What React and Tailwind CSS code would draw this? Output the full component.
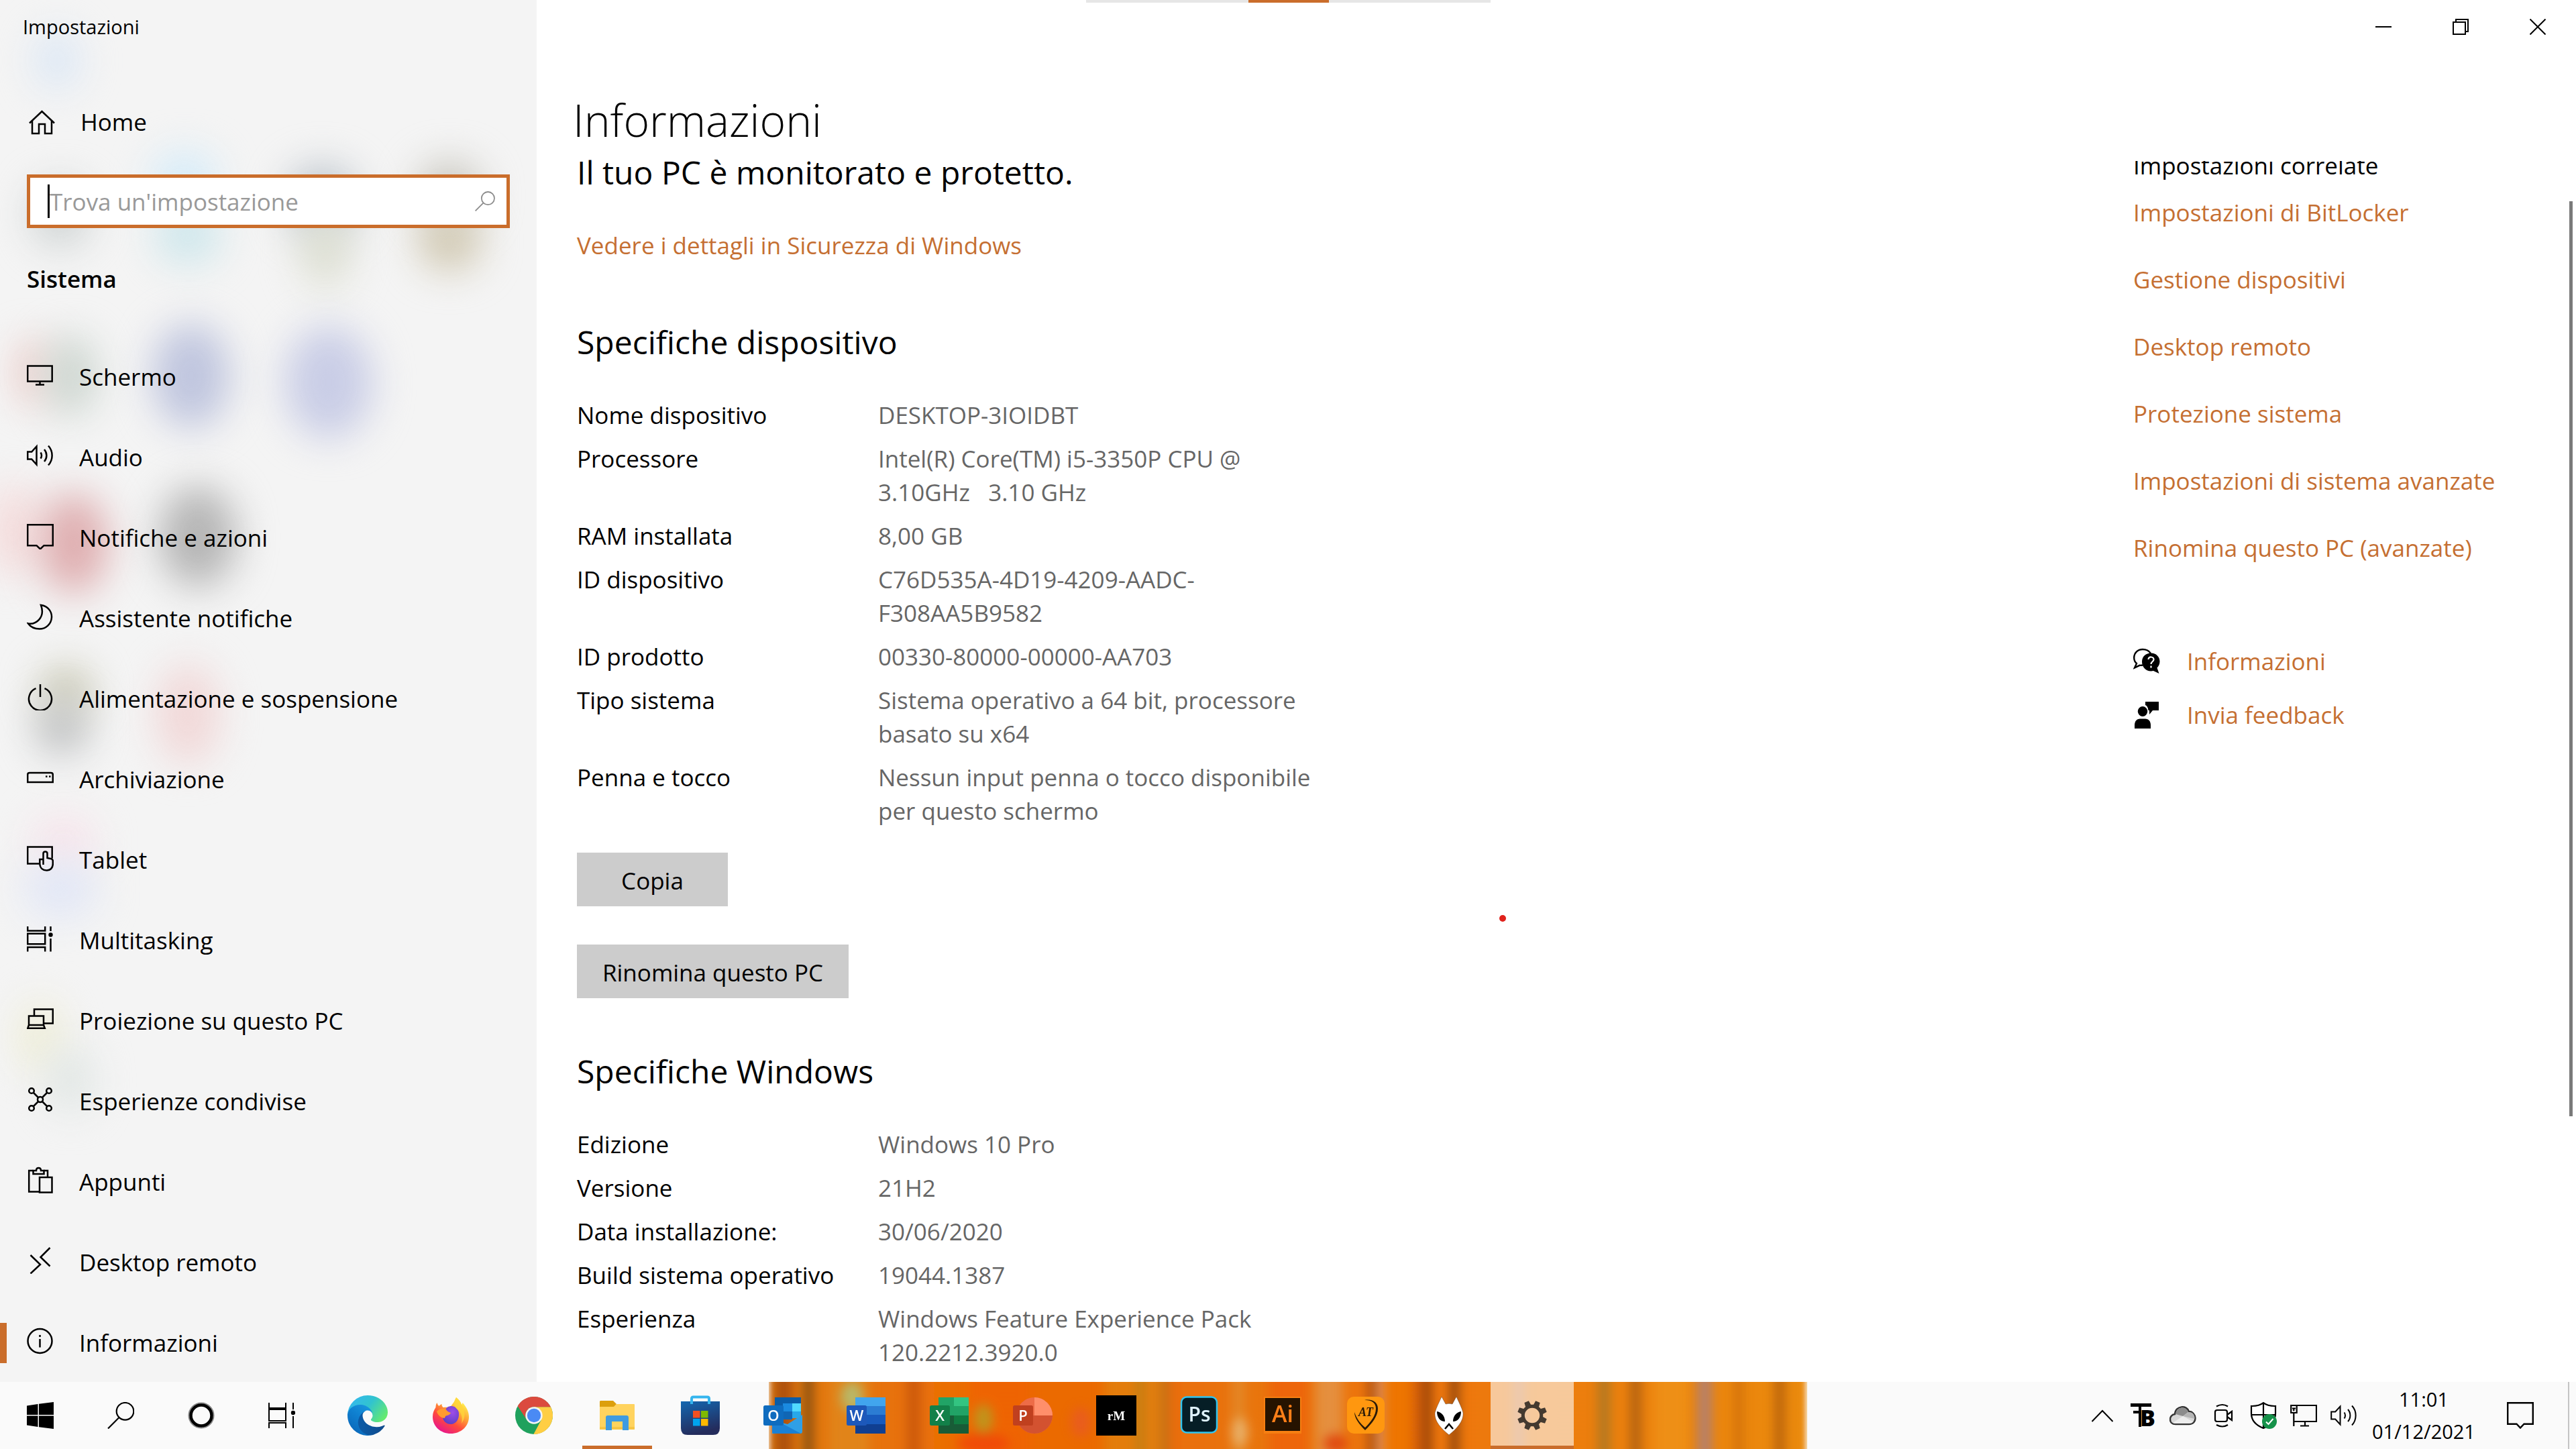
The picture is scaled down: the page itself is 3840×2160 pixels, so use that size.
import React from "react";

/* ---------- line icons, drawn on a 40 x 40 grid ---------- */

function Glyph({ children, width = 2.5, className = "size-10" }) {
  return (
    <svg
      viewBox="0 0 40 40"
      className={className + " shrink-0"}
      fill="none"
      stroke="currentColor"
      strokeWidth={width}
      aria-hidden="true"
    >
      {children}
    </svg>
  );
}

const icons = {
  home: (
    <>
      <path d="M4 21.500 22.500 4 41 21.500" />
      <path d="M8 18v19h10V23h9v14h10V18" />
    </>
  ),
  display: (
    <>
      <path d="M1.200 6.500h36.500v23H1.200z" />
      <path d="M19.500 29.500v5M13 34.500h13" />
    </>
  ),
  audio: (
    <>
      <path d="M1.200 14.500h6l7.300-8v27l-7.300-8h-6z" />
      <path d="M20.500 15.500c2 2.500 2 6.500 0 9M26 11c4.500 5 4.500 13 0 18M32 5.500c7.500 8 7.500 21 0 29" />
    </>
  ),
  notify: <path d="M1.200 3.200h37.600v31H25.500L20 39.500l-5.500-5.300H1.200z" />,
  moon: <path d="M21 3c10.500 1.500 16.500 9.500 16 18.500-.6 9.500-8.500 17-18 17-7.500 0-13.500-3-17-8C13 32.500 28 22 21 3z" />,
  power: (
    <>
      <path d="M13.500 7.200A17 17 0 1 0 26.500 7.200" />
      <path d="M20 1v19" />
    </>
  ),
  storage: (
    <>
      <path d="M4 13h32q2.800 0 2.800 2.800V27H1.200V15.800Q1.200 13 4 13z" />
      <path d="M28 18.500h2.500M33 18.500h2.500" />
    </>
  ),
  tablet: (
    <>
      <path d="M18 28.500H1.200V3.500h36.500v17" />
      <path d="M24.500 30V13.500q0-3 3-3t3 3V20l6 1.200q2.300.6 2.300 3V29c0 6-4 9.500-9 9.500-6 0-10-3.500-10.500-9.500v-7h5" />
    </>
  ),
  multitask: (
    <>
      <path d="M1.200 2v6.500h26V2M1.200 12.800h26v15.500h-26zM1.200 39.500V33h26v6.500M35.500 2v7M35.500 20v19.500" />
      <circle cx="35.500" cy="14.500" r="3.200" fill="currentColor" stroke="none" />
    </>
  ),
  project: (
    <>
      <path d="M11 15V5.500h27.800v21H25" />
      <path d="M3 15.500h22V29H3zM3 29 1.300 33.800h25.500L25 29" />
    </>
  ),
  shared: (
    <>
      <circle cx="20" cy="20" r="4" />
      <circle cx="7" cy="7" r="3.800" />
      <circle cx="33" cy="7" r="3.800" />
      <circle cx="7" cy="33" r="3.800" />
      <circle cx="33" cy="33" r="3.800" />
      <path d="m10 10 7 7M30 10l-7 7M10 30l7-7M30 30l-7-7" />
    </>
  ),
  clipboard: (
    <>
      <path d="M18 37.500H3.200V6h6M25 6h6v10" />
      <path d="M9.500 11V6h4.500c0-5.500 7-5.500 7 0h4.500v5z" />
      <path d="M19 16h18.500v22.500H19z" />
    </>
  ),
  remote: <path d="M34.500 1 20.500 15l14 13.500M5.500 12 20 26 5.500 39.500" />,
  info: (
    <>
      <circle cx="19.500" cy="20" r="18" />
      <path d="M19.500 17v12.500M19.500 11v3" />
    </>
  ),
};

const navItems = [
  ["display", "Schermo"],
  ["audio", "Audio"],
  ["notify", "Notifiche e azioni"],
  ["moon", "Assistente notifiche"],
  ["power", "Alimentazione e sospensione"],
  ["storage", "Archiviazione"],
  ["tablet", "Tablet"],
  ["multitask", "Multitasking"],
  ["project", "Proiezione su questo PC"],
  ["shared", "Esperienze condivise"],
  ["clipboard", "Appunti"],
  ["remote", "Desktop remoto"],
  ["info", "Informazioni"],
];

/* Desktop icons showing softly through the acrylic side panel: x, y, rx, ry, colour */
const glow = [
  [85, 90, 34, 44, "#dbe7f5"],
  [90, 320, 45, 50, "#d0d5d5"],
  [275, 265, 50, 40, "#d6ecf9"],
  [280, 350, 50, 45, "#cfe7ec"],
  [480, 300, 55, 55, "#c0c7ce"],
  [485, 370, 38, 60, "#dddfd2"],
  [670, 290, 50, 50, "#cac8c0"],
  [670, 360, 48, 45, "#d2cab4"],
  [50, 555, 28, 50, "#efcfcc"],
  [105, 560, 40, 60, "#cdd6d0"],
  [285, 560, 58, 78, "#bfc5de"],
  [490, 570, 66, 84, "#c9cde6"],
  [20, 790, 45, 70, "#f5dfdf"],
  [110, 810, 52, 75, "#dfaeb0"],
  [295, 800, 58, 75, "#b5b5b5"],
  [98, 1030, 40, 38, "#cbcab6"],
  [92, 1085, 40, 40, "#bfc1c2"],
  [280, 1065, 48, 75, "#f1d8d8"],
  [95, 1255, 48, 40, "#f7e4eb"],
  [90, 1325, 56, 45, "#e2e7f6"],
  [60, 1545, 34, 55, "#efeed8"],
  [105, 1610, 34, 50, "#e0e6e4"],
];

function SidebarGlow() {
  return (
    <svg
      className="pointer-events-none absolute left-0 top-0"
      width="800"
      height="1800"
      aria-hidden="true"
    >
      <defs>
        <filter
          id="glow-blur"
          x="-150%"
          y="-150%"
          width="400%"
          height="400%"
          colorInterpolationFilters="sRGB"
        >
          <feGaussianBlur stdDeviation="28" />
        </filter>
      </defs>
      {glow.map(([x, y, rx, ry, color]) => (
        <ellipse key={x + "-" + y} cx={x} cy={y} rx={rx} ry={ry} fill={color} filter="url(#glow-blur)" />
      ))}
    </svg>
  );
}

function Sidebar() {
  return (
    <aside className="relative w-[800px] shrink-0 overflow-hidden bg-[#f4f4f4]">
      <SidebarGlow />
      <div className="relative">
        <div className="flex h-20 items-center pl-[34px] text-[29px]">Impostazioni</div>
        <a href="#home" className="mt-[60px] flex h-[84px] items-center gap-10 pl-10">
          <Glyph className="size-10 overflow-visible">{icons.home}</Glyph>
          <span>Home</span>
        </a>
        <div className="mx-10 mt-9 flex h-20 items-center border-[5px] border-[#ca6d2b] bg-white pl-[26px] pr-[16px]">
          <span className="h-[50px] w-[3px] shrink-0 bg-black" />
          <input
            type="text"
            aria-label="Trova un'impostazione"
            placeholder="Trova un'impostazione"
            className="h-full min-w-0 flex-1 bg-transparent text-black placeholder-[#999999] outline-none"
          />
          <Glyph className="size-8 text-[#8c8c8c]" width={2.2}>
            <circle cx="25.500" cy="14.500" r="12" />
            <path d="M17 23 2 38" />
          </Glyph>
        </div>
        <h2 className="ml-10 mt-[46px] leading-[60px] font-semibold">Sistema</h2>
        <nav className="mt-14">
          {navItems.map(([icon, label]) => (
            <a
              key={label}
              href={"#" + icon}
              aria-current={icon === "info" ? "page" : undefined}
              className="flex h-[120px] items-center"
            >
              <span
                className={
                  icon === "info" ? "h-[60px] w-2.5 bg-[#ca6d2b]" : "h-[60px] w-2.5"
                }
              />
              <span className="flex items-center gap-[38px] pl-[30px]">
                <span className="pb-1.5">
                  <Glyph>{icons[icon]}</Glyph>
                </span>
                <span>{label}</span>
              </span>
            </a>
          ))}
        </nav>
      </div>
    </aside>
  );
}

/* ---------- main page ---------- */

const deviceSpecs = [
  ["Nome dispositivo", "DESKTOP-3IOIDBT"],
  ["Processore", "Intel(R) Core(TM) i5-3350P CPU @ 3.10GHz\u00a0\u00a0\u00a03.10\u00a0GHz"],
  ["RAM installata", "8,00 GB"],
  ["ID dispositivo", "C76D535A-4D19-4209-AADC-F308AA5B9582"],
  ["ID prodotto", "00330-80000-00000-AA703"],
  ["Tipo sistema", "Sistema operativo a 64 bit, processore basato su x64"],
  ["Penna e tocco", "Nessun input penna o tocco disponibile per questo schermo"],
];

const windowsSpecs = [
  ["Edizione", "Windows 10 Pro"],
  ["Versione", "21H2"],
  ["Data installazione:", "30/06/2020"],
  ["Build sistema operativo", "19044.1387"],
  ["Esperienza", "Windows Feature Experience Pack 120.2212.3920.0"],
];

function SpecList({ rows }) {
  return (
    <dl className="mt-[54px] flex flex-col gap-[15px] leading-[50px]">
      {rows.map(([name, value]) => (
        <div key={name} className="grid grid-cols-[449px_690px]">
          <dt>{name}</dt>
          <dd className="text-[#666666]">{value}</dd>
        </div>
      ))}
    </dl>
  );
}

const relatedLinks = [
  "Impostazioni di BitLocker",
  "Gestione dispositivi",
  "Desktop remoto",
  "Protezione sistema",
  "Impostazioni di sistema avanzate",
  "Rinomina questo PC (avanzate)",
];

function Related() {
  return (
    <aside className="w-[660px] shrink-0 leading-[50px]">
      <div className="mt-[19px] flex h-8 items-end overflow-hidden">
        <h2>Impostazioni correlate</h2>
      </div>
      <ul className="mt-5 flex flex-col gap-[50px] text-[#c56f32]">
        {relatedLinks.map((label) => (
          <li key={label}>
            <a href="#correlate">{label}</a>
          </li>
        ))}
      </ul>
      <ul className="mt-[104px] text-[#c56f32]">
        <li>
          <a href="#aiuto" className="flex h-20 items-center gap-10">
            <svg viewBox="0 0 40 40" className="size-10 text-black" aria-hidden="true">
              <path
                d="M14 25.500c-1.500.4-3 .4-4.500.3L2 29.500l3-6.500C2 20.500 1.200 18 1.200 14.500 1.200 7.500 6.500 2 14 2c5.500 0 9.500 2 12 6"
                fill="none"
                stroke="currentColor"
                strokeWidth="2.400"
              />
              <path
                d="M26.500 7.500C34 7.500 39.500 13 39.500 20c0 4-1.500 7-4 9.500l3 8.500-8.500-4c-1 .3-2.300.5-3.500.5-7.500 0-13.500-6-13.500-14s6-13 13.500-13z"
                fill="currentColor"
              />
              <path d="M22.500 17c.5-5 8.500-4.500 8 .3-.3 3-4 3.200-4 6.700M26.500 26.500v3" fill="none" stroke="#fff" strokeWidth="2.200" />
            </svg>
            Informazioni
          </a>
        </li>
        <li>
          <a href="#feedback" className="flex h-20 items-center gap-10">
            <svg viewBox="0 0 40 40" className="size-10 text-black" fill="currentColor" aria-hidden="true">
              <path d="M18 0h20v13H29l-5 6v-6h-1.500C22 8.500 20.500 6 18 5z" />
              <ellipse cx="14" cy="14.500" rx="7.200" ry="7.500" />
              <path d="M2 40v-5c0-5.500 3-9.500 8-9.500h8c5 0 8 4 8 9.500v5z" />
            </svg>
            Invia feedback
          </a>
        </li>
      </ul>
    </aside>
  );
}

function WindowControls() {
  return (
    <div className="flex h-20 justify-end">
      <button type="button" aria-label="Riduci a icona" className="grid w-[115px] place-items-center">
        <svg viewBox="0 0 24 24" className="size-6" fill="none" stroke="#000" strokeWidth="2">
          <path d="M0 12h24" />
        </svg>
      </button>
      <button type="button" aria-label="Ripristina" className="grid w-[115px] place-items-center">
        <svg viewBox="0 0 24 24" className="size-6" fill="none" stroke="#000" strokeWidth="2">
          <path d="M1 5h18v18H1zM5 5V1h18v18h-4" />
        </svg>
      </button>
      <button type="button" aria-label="Chiudi" className="grid w-[115px] place-items-center">
        <svg viewBox="0 0 24 24" className="size-6" fill="none" stroke="#000" strokeWidth="2">
          <path d="m.5.5 23 23m0-23-23 23" />
        </svg>
      </button>
    </div>
  );
}

function Content() {
  return (
    <main className="relative flex min-w-0 flex-1 flex-col bg-white">
      <WindowControls />
      <h1 className="mt-[55px] pl-[54px] text-[66px] leading-[86px] font-light">Informazioni</h1>
      <div className="min-h-0 flex-1 overflow-hidden">
        <div className="flex justify-between pl-[60px]">
          <div>
            <p className="pt-1.5 text-[48px] leading-[60px]">Il tuo PC è monitorato e protetto.</p>
            <a href="#sicurezza" className="mt-[54px] block leading-[50px] text-[#c56f32]">
              Vedere i dettagli in Sicurezza di Windows
            </a>
            <h2 className="mt-[89px] text-[48px] leading-[60px]">Specifiche dispositivo</h2>
            <SpecList rows={deviceSpecs} />
            <button type="button" className="mt-[37px] block h-20 w-[225px] bg-[#cccccc] pt-1">
              Copia
            </button>
            <button type="button" className="mt-[57px] block h-20 w-[405px] bg-[#cccccc] pt-1">
              Rinomina questo PC
            </button>
            <h2 className="mt-[79px] text-[48px] leading-[60px]">Specifiche Windows</h2>
            <SpecList rows={windowsSpecs} />
          </div>
          <Related />
        </div>
      </div>
      <div className="absolute right-[5px] top-[300px] h-[1364px] w-[5px] bg-[#7a7a7a]" />
    </main>
  );
}

/* ---------- taskbar ---------- */

/* Blurred autumn wallpaper behind the app buttons: x, width, colour, opacity */
const streaks = [
  [8, 28, "#a3470c", 0.8],
  [52, 14, "#7a4a14", 0.9],
  [90, 60, "#e08a20", 0.7],
  [206, 20, "#c0500c", 0.7],
  [300, 90, "#f25a05", 0.4],
  [500, 90, "#e08410", 0.7],
  [548, 12, "#a8801c", 0.6],
  [584, 12, "#a8701c", 0.6],
  [690, 20, "#e09a40", 0.5],
  [745, 60, "#f05a0a", 0.6],
  [815, 40, "#e0a870", 0.5],
  [892, 14, "#9a4410", 0.7],
  [907, 10, "#dba890", 0.7],
  [960, 16, "#c04c08", 0.6],
  [975, 14, "#8a3c08", 0.8],
  [1015, 14, "#7a3a0c", 0.8],
  [1110, 16, "#b08080", 0.8],
  [1236, 18, "#8a7430", 0.6],
  [1284, 16, "#a35a14", 0.8],
  [1320, 50, "#f0981c", 0.6],
  [1384, 22, "#b08074", 0.9],
  [1440, 12, "#c0600c", 0.6],
  [1500, 14, "#a8560c", 0.8],
];

function Wallpaper() {
  return (
    <svg
      className="pointer-events-none absolute inset-y-0 left-[1146px] h-full w-[1548px]"
      viewBox="0 0 1548 100"
      preserveAspectRatio="none"
      aria-hidden="true"
    >
      <defs>
        <filter
          id="streak-blur"
          x="-5%"
          y="-40%"
          width="110%"
          height="180%"
          colorInterpolationFilters="sRGB"
        >
          <feGaussianBlur stdDeviation="8" />
        </filter>
        <filter id="edge-blur" x="-2%" y="-20%" width="104%" height="140%">
          <feGaussianBlur stdDeviation="4 0" />
        </filter>
        <linearGradient id="autumn" x1="0" x2="1">
          <stop offset="0" stopColor="#e07a10" />
          <stop offset=".2" stopColor="#ec6c04" />
          <stop offset=".35" stopColor="#ea6a06" />
          <stop offset=".5" stopColor="#e8780c" />
          <stop offset=".6" stopColor="#ee7406" />
          <stop offset="1" stopColor="#ea8a10" />
        </linearGradient>
      </defs>
      <rect x="2" width="1544" height="100" fill="url(#autumn)" filter="url(#edge-blur)" />
      <g filter="url(#streak-blur)">
        {streaks.map(([x, w, color, opacity]) => (
          <rect key={x} x={x} y="-40" width={w} height="180" fill={color} opacity={opacity} />
        ))}
        <ellipse cx="124" cy="22" rx="16" ry="22" fill="#b8b868" />
        <ellipse cx="320" cy="55" rx="14" ry="22" fill="#c0941c" />
        <ellipse cx="320" cy="92" rx="40" ry="14" fill="#f04a08" />
        <ellipse cx="465" cy="60" rx="14" ry="22" fill="#e8503c" opacity=".5" />
        <ellipse cx="702" cy="75" rx="12" ry="22" fill="#e8b068" />
        <ellipse cx="845" cy="92" rx="18" ry="14" fill="#e04a10" />
      </g>
    </svg>
  );
}

function OfficeTile({ letter, badge, children }) {
  return (
    <svg viewBox="0 0 60 60" className="size-[60px]" aria-hidden="true">
      {children}
      <rect x="0" y="15" width="30" height="30" rx="2.500" fill={badge} />
      <text x="15" y="38" textAnchor="middle" fontSize="22" fontWeight="600" fill="#fff">
        {letter}
      </text>
    </svg>
  );
}

const appIcons = {
  Edge: (
    <svg viewBox="0 0 256 256" className="size-[60px]" aria-hidden="true">
      <defs>
        <linearGradient id="edge-a" x1=".2" x2="1" y1=".5" y2=".5">
          <stop offset="0" stopColor="#0c59a4" />
          <stop offset="1" stopColor="#114a8b" />
        </linearGradient>
        <linearGradient id="edge-b" x1=".9" x2=".3" y1="0" y2="1">
          <stop offset="0" stopColor="#1b9de2" />
          <stop offset=".5" stopColor="#0f80d0" />
          <stop offset="1" stopColor="#0a66b8" />
        </linearGradient>
        <linearGradient id="edge-c" x1="0" x2="1" y1=".2" y2=".7">
          <stop offset="0" stopColor="#35b8f0" />
          <stop offset=".5" stopColor="#31c3cf" />
          <stop offset="1" stopColor="#66eb6e" />
        </linearGradient>
      </defs>
      <path fill="url(#edge-a)" d="M231 190.500c-3.400 1.800-6.900 3.400-10.500 4.700a101 101 0 0 1-35.900 6.500c-47.300 0-88.500-32.500-88.500-74.300.1-11.400 6.400-21.900 16.400-27.300-42.800 1.800-53.800 46.400-53.800 72.500 0 73.900 68.100 81.400 82.800 81.400 7.900 0 19.800-2.300 27-4.600l1.300-.4a128 128 0 0 0 66.600-52.800 4 4 0 0 0-5.400-5.700z" />
      <path fill="url(#edge-b)" d="M105.700 241.400A79 79 0 0 1 83 220.100a80.700 80.700 0 0 1 29.500-120c3.100-1.500 8.400-4.100 15.500-4a32.400 32.400 0 0 1 25.700 13 32 32 0 0 1 6.400 18.700c0-.2 24.500-79.600-80-79.600-43.900 0-80 41.700-80 78.200-.2 19.300 4 38.500 12.100 56a128 128 0 0 0 156.400 67.100 75.500 75.500 0 0 1-62.900-8.100z" />
      <path fill="url(#edge-c)" d="M152.300 148.900c-.8 1-3.300 2.500-3.300 5.700 0 2.600 1.700 5.100 4.700 7.200 14.400 10 41.500 8.700 41.600 8.700 10.700 0 21.100-2.900 30.300-8.300a61.400 61.400 0 0 0 30.400-52.900c.3-22.400-8-37.300-11.300-43.900C223.500 23.900 177.700 0 128 0A128 128 0 0 0 0 126.200c.5-36.500 36.800-66 80-66 3.500 0 23.500.3 42 10.100 16.300 8.600 24.900 18.900 30.800 29.200 6.200 10.700 7.300 24.100 7.300 29.500s-2.700 13.300-7.800 19.900z" />
    </svg>
  ),
  Firefox: (
    <svg viewBox="0 0 56 56" className="size-14" aria-hidden="true">
      <defs>
        <linearGradient id="ff-a" x1=".8" x2=".25" y1=".1" y2=".95">
          <stop offset="0" stopColor="#fff44f" />
          <stop offset=".35" stopColor="#ffa436" />
          <stop offset=".65" stopColor="#ff4b3b" />
          <stop offset="1" stopColor="#e8178a" />
        </linearGradient>
        <radialGradient id="ff-b" cx=".6" cy=".35" r=".7">
          <stop offset="0" stopColor="#a04ce8" />
          <stop offset="1" stopColor="#5b3fc4" />
        </radialGradient>
      </defs>
      <path fill="url(#ff-a)" d="M36 1c4 3 7 7 8 11 1-1 1.500-2 1.500-3C51 15 55 22 55 30c0 14.500-12 25-27 25S1 44.500 1 30c0-6 2-10 4.500-14 0-2.500.5-5 2-7 .5 2 1.500 4 3 5 1-1.500 2.500-2.500 4-3 0 2 .5 3.500 2 5 4-.5 8-.5 11 0C29 12 33 9 36 1z" />
      <path fill="url(#ff-b)" d="M20 20c1-4 5-6 9-6 5 0 10 4 11 10 1 9-4 17-12 17-7 0-12-5-12-11 0-2 .5-3 1.500-4 3 1 6 0 8-2-2-1-4-2-5.500-4z" />
      <path fill="#ff9b2e" d="M7 22c4-4 9-5 14-3 1.500 3 4 4 7 5-1 3-5 4-7 4.500-1 .5-2 2-2 3.500-4 0-10-3-12-10z" />
      <path fill="#ffd43a" opacity=".8" d="M36 1c4 3 7 7 8 11 6 9 6 20 0 28 2-8 0-16-5-20-5-4-9-9-3-19z" />
    </svg>
  ),
  Chrome: (
    <svg viewBox="2 2 44 44" className="size-14" aria-hidden="true">
      <circle cx="24" cy="24" r="22" fill="#1fa15d" />
      <path fill="#ffce44" d="M24 14h19.600A22 22 0 0 1 23.500 46l9.200-17z" />
      <path fill="#db4a3e" d="M4.900 13a22 22 0 0 1 38.700 1H24a10 10 0 0 0-8.700 15z" />
      <circle cx="24" cy="24" r="10" fill="#f4f4f4" />
      <circle cx="24" cy="24" r="8" fill="#4a8af4" />
    </svg>
  ),
  "Esplora file": (
    <svg viewBox="0 0 54 54" className="size-[54px]" aria-hidden="true">
      <path fill="#dc9f0c" d="M2 5h19l5 5-5 6H1V6z" />
      <path fill="#ffd35e" d="M1 14h21l4-4h26q1 0 1 1v36q0 1-1 1H1z" />
      <path fill="#f7c545" d="M1 44h52v3q0 1-1 1H1z" />
      <path fill="#3f9be0" d="M10 49V30q0-3 3-3h28q3 0 3 3v19h-9V36H19v13z" />
    </svg>
  ),
  "Microsoft Store": (
    <svg viewBox="0 0 60 60" className="size-[60px]" aria-hidden="true">
      <defs>
        <linearGradient id="store" x1="0" x2=".3" y1="0" y2="1">
          <stop offset="0" stopColor="#1467b0" />
          <stop offset="1" stopColor="#242c5c" />
        </linearGradient>
      </defs>
      <path fill="url(#store)" d="M1 9h58v40q0 10-10 10H11Q1 59 1 49z" />
      <path fill="none" stroke="#35b5ee" strokeWidth="4" d="M17 13V5q0-2.500 2.500-2.500h21Q43 2.500 43 5v8" />
      <path fill="#f25022" d="M19 23h10.500v10.500H19z" />
      <path fill="#7fba00" d="M31 23h10.500v10.500H31z" />
      <path fill="#00a4ef" d="M19 35h10.500v10.500H19z" />
      <path fill="#ffb900" d="M31 35h10.500v10.500H31z" />
    </svg>
  ),
  Outlook: (
    <OfficeTile letter="O" badge="#0f6cbf">
      <path fill="#0a5ca8" d="M17 3h39v28H17z" />
      <path fill="#1a8ae0" d="M29 12h14v12H29z" />
      <path fill="#50d9ff" d="M43 12h13v12H43z" />
      <path fill="#1066b5" d="M29 24h14v12H29z" />
      <path fill="#28a8ea" d="M43 24h13v10H43z" />
      <path fill="#2f9fe6" d="M13 57V37l23 6 22-14v25q0 3-3 3z" />
      <path fill="#1b80d4" d="M13 34l43 23H16q-3 0-3-3z" />
    </OfficeTile>
  ),
  Word: (
    <OfficeTile letter="W" badge="#1d58ba">
      <path fill="#41a5ee" d="M13 3h45v14H13z" />
      <path fill="#2b7cd3" d="M13 16h45v14H13z" />
      <path fill="#185abd" d="M13 29h45v14H13z" />
      <path fill="#103f91" d="M13 43h45v14H13z" />
    </OfficeTile>
  ),
  Excel: (
    <OfficeTile letter="X" badge="#128049">
      <path fill="#21a366" d="M13 3h23v27H13z" />
      <path fill="#33c481" d="M36 3h22v13H36z" />
      <path fill="#21a366" d="M36 16h22v14H36z" />
      <path fill="#185c37" d="M13 30h45v27H13z" />
      <path fill="#107c41" d="M36 30h22v13H36z" />
    </OfficeTile>
  ),
  PowerPoint: (
    <OfficeTile letter="P" badge="#c0401f">
      <circle cx="32" cy="30" r="27" fill="#ed6c47" />
      <path fill="#ff8f6b" d="M32 3a27 27 0 0 1 27 27H32z" />
      <path fill="#d35230" d="M5 30h54a27 27 0 0 1-54 0z" />
    </OfficeTile>
  ),
  reMarkable: (
    <svg viewBox="0 0 60 60" className="size-[60px]" aria-hidden="true">
      <path d="M0 0h60v60H0z" />
      <text x="30" y="37" textAnchor="middle" fontSize="19" fontWeight="700" fill="#fff" className="font-['Liberation_Serif',serif]">
        rM
      </text>
    </svg>
  ),
  Photoshop: (
    <svg viewBox="0 0 60 60" className="size-[60px]" aria-hidden="true">
      <rect x="3" y="2.500" width="53" height="53" rx="8" fill="#061e26" stroke="#31c5f0" strokeWidth="2.500" />
      <text x="30" y="39" textAnchor="middle" fontSize="30" fontWeight="600" fill="#dff3ff">
        Ps
      </text>
    </svg>
  ),
  Illustrator: (
    <svg viewBox="0 0 60 60" className="size-[60px]" aria-hidden="true">
      <path fill="#f67f12" d="M2 2h56v55H2z" />
      <path fill="#261300" d="M4 4h52v49H4z" />
      <text x="30" y="40" textAnchor="middle" fontSize="34" fontWeight="600" fill="#ff7f18">
        Ai
      </text>
    </svg>
  ),
  ArtTuner: (
    <svg viewBox="0 0 60 60" className="size-[60px]" aria-hidden="true">
      <rect x="2" y="2" width="56" height="55" rx="10" fill="#ff970f" />
      <path fill="#2a1a08" d="M28 7c13-2 20 4 20 13 0 11-9 22-19 32C20 43 13 34 13 25c4 11 9 17 16 23 8-8 16-18 16-28C45 11 39 7 28 7z" />
      <text x="30" y="31" textAnchor="middle" fontSize="18" fontStyle="italic" fontWeight="700" fill="#2a1a08" className="font-['Liberation_Serif',serif]">
        AT
      </text>
    </svg>
  ),
  foobar2000: (
    <svg viewBox="0 0 60 60" className="size-[60px]" aria-hidden="true">
      <path fill="#fff" stroke="#4a3020" strokeOpacity=".4" d="M19 2l6 11q5-1.500 10 0l6-11c4 9 8 16 10 24 1 13-10 24-21 33C19 50 8 39 9 26c2-8 6-15 10-24z" />
      <path d="M12 24c6 1 12 6 12 15-7 0-12-6-12-15zM48 24c-6 1-12 6-12 15 7 0 12-6 12-15z" />
      <path fill="none" stroke="#000" strokeWidth="2.500" d="M24 50l6-7 6 7" />
    </svg>
  ),
  Impostazioni: (
    <svg viewBox="-22 -22 44 44" className="size-11" aria-hidden="true">
      <circle r="13.700" fill="none" stroke="#443a30" strokeWidth="5" />
      {[22.5, 67.5, 112.5, 157.5, 202.5, 247.5, 292.5, 337.5].map((angle) => (
        <path key={angle} d="M-4.500-14-3.500-22h7l1 8z" fill="#443a30" transform={`rotate(${angle})`} />
      ))}
    </svg>
  ),
};

const systemButtons = [
  [
    "Start",
    <svg key="s" viewBox="0 0 40 40" className="size-10">
      <path d="M0 5.500 16.500 3v16H0zM18 2.800 40 0v19H18zM0 20.500h16.500V37L0 34.500zM18 20.500h22V40l-22-2.800z" />
    </svg>,
  ],
  [
    "Cerca",
    <Glyph key="c" width={2.2}>
      <circle cx="26.500" cy="13.800" r="12.800" />
      <path d="M17 23.500 1 39.500" />
    </Glyph>,
  ],
  [
    "Cortana",
    <Glyph key="o" width={4.5}>
      <circle cx="20" cy="20" r="15.500" />
      <circle cx="20" cy="20" r="18.500" strokeWidth="2" opacity=".45" />
    </Glyph>,
  ],
  [
    "Visualizzazione attività",
    <Glyph key="v" width={2}>
      <path d="M1 1v8h25V1M1 11h25v17H1zM1 39v-8h25v8M37 1v10M37 21v18" />
      <circle cx="37" cy="16" r="3.200" fill="currentColor" stroke="none" />
    </Glyph>,
  ],
];

const trayButtons = [
  [
    "Mostra icone nascoste",
    <Glyph key="a" width={2}>
      <path d="m4.500 29 15.500-16 15.500 16" />
    </Glyph>,
  ],
  [
    "TB",
    <svg key="b" viewBox="0 0 40 40" className="size-10">
      <path d="M2 2h31v5H18v30h-4V7H2zM6 13h8v4H6z" />
      <text x="16" y="36" fontSize="34" fontWeight="800">
        B
      </text>
    </svg>,
  ],
  [
    "OneDrive",
    <svg key="c" viewBox="0 0 40 40" className="size-10">
      <path
        fill="#d8d8d8"
        stroke="#333"
        strokeWidth="2.500"
        d="M9 33c-11 0-10-14-1-15C9 5 26 4 29 14c11 0 14 19 0 19z"
      />
      <path fill="#8c8c8c" d="M9 18C11 6 25 6 28 15l-8 6z" />
      <path fill="#b5b5b5" d="M20 21l9-6c6 0 9 5 8.500 10z" />
      <path fill="#ededed" d="M20 21 5 31q2 1 4 1h20q4 0 6.500-2.500z" />
    </svg>,
  ],
  [
    "Riunione immediata",
    <Glyph key="d" width={2.2}>
      <rect x="8" y="12" width="18" height="17" rx="3" />
      <path d="m26 19 7-5v13l-7-5M10 6.500q9-5 17 0M10 34q9 5 17 0" />
    </Glyph>,
  ],
  [
    "Sicurezza di Windows",
    <svg key="e" viewBox="0 0 40 40" className="size-10">
      <path
        fill="#fff"
        stroke="#000"
        strokeWidth="2.200"
        d="M20 1.200c5 4 11 5 18 4.800V17c0 11-8 18-18 22C10 35 2 28 2 17V6c7 .2 13-.8 18-4.800zM20 1v38M2 19h36"
      />
      <circle cx="29" cy="29" r="11" fill="#16924a" />
      <path fill="none" stroke="#fff" strokeWidth="2" d="m24 29.500 3.500 3.500 7-8" />
    </svg>,
  ],
  [
    "Rete",
    <Glyph key="f" width={2.2}>
      <path d="M9 5h30v24H6M22 29v6M15 35.500h13M1.200 5h8.500v11H1.200zM5.300 16v20M3 9.500h5M5.300 9.500v4" />
    </Glyph>,
  ],
  ["Volume", <Glyph key="g" width={2}>{icons.audio}</Glyph>],
];

function Taskbar() {
  return (
    <footer className="relative flex h-[100px] shrink-0 bg-[#fafafa]">
      <Wallpaper />
      <div className="relative flex">
        {systemButtons.map(([label, icon]) => (
          <button key={label} type="button" aria-label={label} className="grid w-[120px] place-items-center">
            {icon}
          </button>
        ))}
      </div>
      <div className="relative flex pl-1.5">
        {Object.entries(appIcons).map(([label, icon]) => (
          <button
            key={label}
            type="button"
            aria-label={label}
            className={
              label === "Impostazioni"
                ? "grid w-[124px] place-items-center border-b-[5px] border-[#ca6d2b] bg-[#f9e3cb]/75 pt-[5px]"
                : label === "Esplora file"
                  ? "mx-2.5 grid w-[104px] place-items-center border-b-[5px] border-[#ca6d2b] pt-[5px]"
                  : "grid w-[124px] place-items-center"
            }
          >
            {icon}
          </button>
        ))}
      </div>
      <div className="relative ml-auto flex">
        {trayButtons.map(([label, icon]) => (
          <button key={label} type="button" aria-label={label} className="grid w-[60px] place-items-center">
            {icon}
          </button>
        ))}
        <button type="button" className="flex w-[178px] flex-col items-center justify-center text-[29px] leading-[48px]">
          <time>11:01</time>
          <time>01/12/2021</time>
        </button>
        <button type="button" aria-label="Centro notifiche" className="grid w-[110px] place-items-center">
          <Glyph width={2.4}>
            <path d="M1.200 1.200h37.600v31.500H25.500L20 38.500l-5.500-5.800H1.200z" />
          </Glyph>
        </button>
        <button type="button" aria-label="Mostra desktop" className="ml-4 w-3 border-l-2 border-[#c4c4c4]" />
      </div>
    </footer>
  );
}

export default function App() {
  return (
    <div className="relative flex h-screen flex-col overflow-hidden bg-white font-['Open_Sans',sans-serif] text-[35px] text-black">
      <div className="flex min-h-0 flex-1">
        <Sidebar />
        <Content />
      </div>
      <Taskbar />
      <div className="absolute left-[1619px] top-0 flex h-1 w-[603px] justify-center bg-[#e6e6e6]">
        <span className="w-[120px] bg-[#ca6d2b]" />
      </div>
      <div className="absolute left-[2235px] top-[1364px] size-[10px] rounded-full bg-[#e0221c]" />
    </div>
  );
}
